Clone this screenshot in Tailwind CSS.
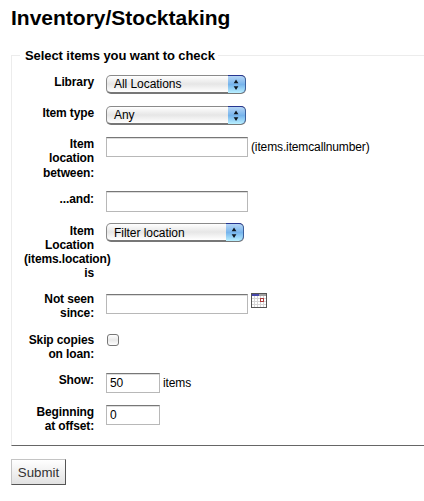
<!DOCTYPE html>
<html lang="en">
<head>
<meta charset="utf-8">
<title>Inventory/Stocktaking</title>
<script src="https://cdn.jsdelivr.net/npm/@tailwindcss/browser@4"></script>
</head>
<body class="h-[501px] overflow-hidden bg-white pl-[11px] text-[12px] leading-[14.4px] tracking-[-0.13px] text-black" style="font-family:'Liberation Sans',Arial,sans-serif">
<svg class="hidden">
  <symbol id="arrows" viewBox="0 0 18 18"><path d="M6 7.8 8.5 3.8 11 7.8zM6 10.8 8.5 14.8 11 10.8z" fill="#101820"/></symbol>
</svg>
<h1 class="h-[55px] whitespace-nowrap pt-[6px] text-[21px] font-bold leading-[24px] tracking-normal">Inventory/Stocktaking</h1>
<form>
  <section class="h-[391px] w-[430px] border border-[#ececec] border-b-[#666]">
    <h2 class="-mt-[8px] ml-[8px] h-[27px] w-[198px] whitespace-nowrap bg-white pl-[5px] text-[13px] font-bold leading-[16px] tracking-[-0.08px]">Select items you want to check</h2>
    <div class="flex h-[31px] gap-3 pl-3">
      <label class="w-[70px] shrink-0 text-right font-bold">Library</label>
      <div class="flex h-[19px] w-[140px] rounded-[5px] border border-[#8a8a8a] border-b-2 border-b-[#777] bg-linear-to-b from-white via-[#e6e6e6] to-white">
        <span class="grow pl-[7px] pt-px tracking-[-0.05px]">All Locations</span>
        <svg class="-mr-px -mt-px h-[18px] w-[18px] rounded-r-[5px] border-r border-t border-r-[#3b5f9c] border-t-[#26358f] bg-linear-to-b from-[#b5d5f5] via-[#76b4ec] to-[#b9f0ff]"><use href="#arrows"/></svg>
      </div>
    </div>
    <div class="flex h-[31px] gap-3 pl-3">
      <label class="w-[70px] shrink-0 text-right font-bold">Item type</label>
      <div class="flex h-[19px] w-[140px] rounded-[5px] border border-[#8a8a8a] border-b-2 border-b-[#777] bg-linear-to-b from-white via-[#e6e6e6] to-white">
        <span class="grow pl-[7px] pt-px tracking-[-0.05px]">Any</span>
        <svg class="-mr-px -mt-px h-[18px] w-[18px] rounded-r-[5px] border-r border-t border-r-[#3b5f9c] border-t-[#26358f] bg-linear-to-b from-[#b5d5f5] via-[#76b4ec] to-[#b9f0ff]"><use href="#arrows"/></svg>
      </div>
    </div>
    <div class="flex h-[54px] gap-3 pl-3">
      <label class="w-[70px] shrink-0 text-right font-bold">Item location between:</label>
      <div class="flex">
        <input class="h-[20px] w-[142px] border border-[#b8b8b8] border-t-[#777] px-[3px] shadow-[inset_0_1px_0_#ddd] outline-none">
        <span class="pl-[3px] pt-[3px]">(items.itemcallnumber)</span>
      </div>
    </div>
    <div class="flex h-[32px] gap-3 pl-3">
      <label class="w-[70px] shrink-0 pt-px text-right font-bold">...and:</label>
      <input class="h-[21px] w-[142px] border border-[#b8b8b8] border-t-[#777] px-[3px] shadow-[inset_0_1px_0_#ddd] outline-none">
    </div>
    <div class="flex h-[71px] gap-3 pl-3">
      <label class="w-[70px] shrink-0 pt-px text-right font-bold leading-[14px]">Item Location <span class="block text-left">(items.location)</span> is</label>
      <div class="flex h-[19px] w-[138px] rounded-[5px] border border-[#8a8a8a] border-b-2 border-b-[#777] bg-linear-to-b from-white via-[#e6e6e6] to-white">
        <span class="grow pl-[7px] pt-[2px] tracking-[-0.05px]">Filter location</span>
        <svg class="-mr-px -mt-px h-[18px] w-[18px] rounded-r-[5px] border-r border-t border-r-[#3b5f9c] border-t-[#26358f] bg-linear-to-b from-[#b5d5f5] via-[#76b4ec] to-[#b9f0ff]"><use href="#arrows"/></svg>
      </div>
    </div>
    <div class="flex h-[39px] gap-3 pl-3">
      <label class="-mt-[2px] w-[70px] shrink-0 text-right font-bold">Not seen since:</label>
      <div class="flex">
        <input class="h-[20px] w-[142px] border border-[#b8b8b8] border-t-[#777] px-[3px] shadow-[inset_0_1px_0_#ddd] outline-none">
        <svg class="-mt-px ml-[3px] h-[15px] w-[16px]" viewBox="0 0 16 15" shape-rendering="crispEdges">
          <path fill="#555" d="M0 0h16v15H0z"/><path fill="#d6d6d6" d="M1 1h14v13H1z"/>
          <path fill="#4749ac" d="M1 1h7v2H1z"/><path fill="#a0a0a0" d="M8 1h7v2H8z"/>
          <path fill="#fff" d="M1 3h2v2H1zM4 3h2v2H4zM7 3h2v2H7zM10 3h2v2h-2zM13 3h2v2h-2zM1 6h2v2H1zM4 6h2v2H4zM7 6h2v2H7zM10 6h2v2h-2zM13 6h2v2h-2zM1 9h2v2H1zM4 9h2v2H4zM7 9h2v2H7zM10 9h2v2h-2zM13 9h2v2h-2zM1 12h2v2H1zM4 12h2v2H4zM7 12h2v2H7zM10 12h2v2h-2zM13 12h2v2h-2z"/>
          <path fill="#fff" stroke="#ab3b3b" d="M9.5 5.5h3v3h-3z"/>
        </svg>
      </div>
    </div>
    <div class="flex h-[40px] gap-3 pl-3">
      <label class="w-[70px] shrink-0 text-right font-bold leading-[14px]">Skip copies on loan:</label>
      <input type="checkbox" class="ml-px mt-px size-3 appearance-none rounded-[3px] border border-[#777] bg-linear-to-b from-white via-[#e9e9e9] to-white">
    </div>
    <div class="flex h-[32px] gap-3 pl-3">
      <label class="w-[70px] shrink-0 text-right font-bold">Show:</label>
      <div class="flex">
        <input value="50" class="h-[20px] w-[54px] border border-[#b8b8b8] border-t-[#777] px-[3px] shadow-[inset_0_1px_0_#ddd] outline-none">
        <span class="pl-[3px] pt-[3px]">items</span>
      </div>
    </div>
    <div class="flex h-[32px] gap-3 pl-3">
      <label class="w-[70px] shrink-0 text-right font-bold leading-[14px]">Beginning at offset:</label>
      <input value="0" class="h-[20px] w-[54px] border border-[#b8b8b8] border-t-[#777] px-[3px] shadow-[inset_0_1px_0_#ddd] outline-none">
    </div>
  </section>
  <button type="button" class="mt-[13px] block h-[26px] w-[55px] border border-[#c4c4c4] border-b-[#555] border-r-[#555] bg-linear-to-b from-white to-[#e2e2e2] pt-[2px] text-[13.3px] tracking-normal text-[#333]">Submit</button>
</form>
</body>
</html>
